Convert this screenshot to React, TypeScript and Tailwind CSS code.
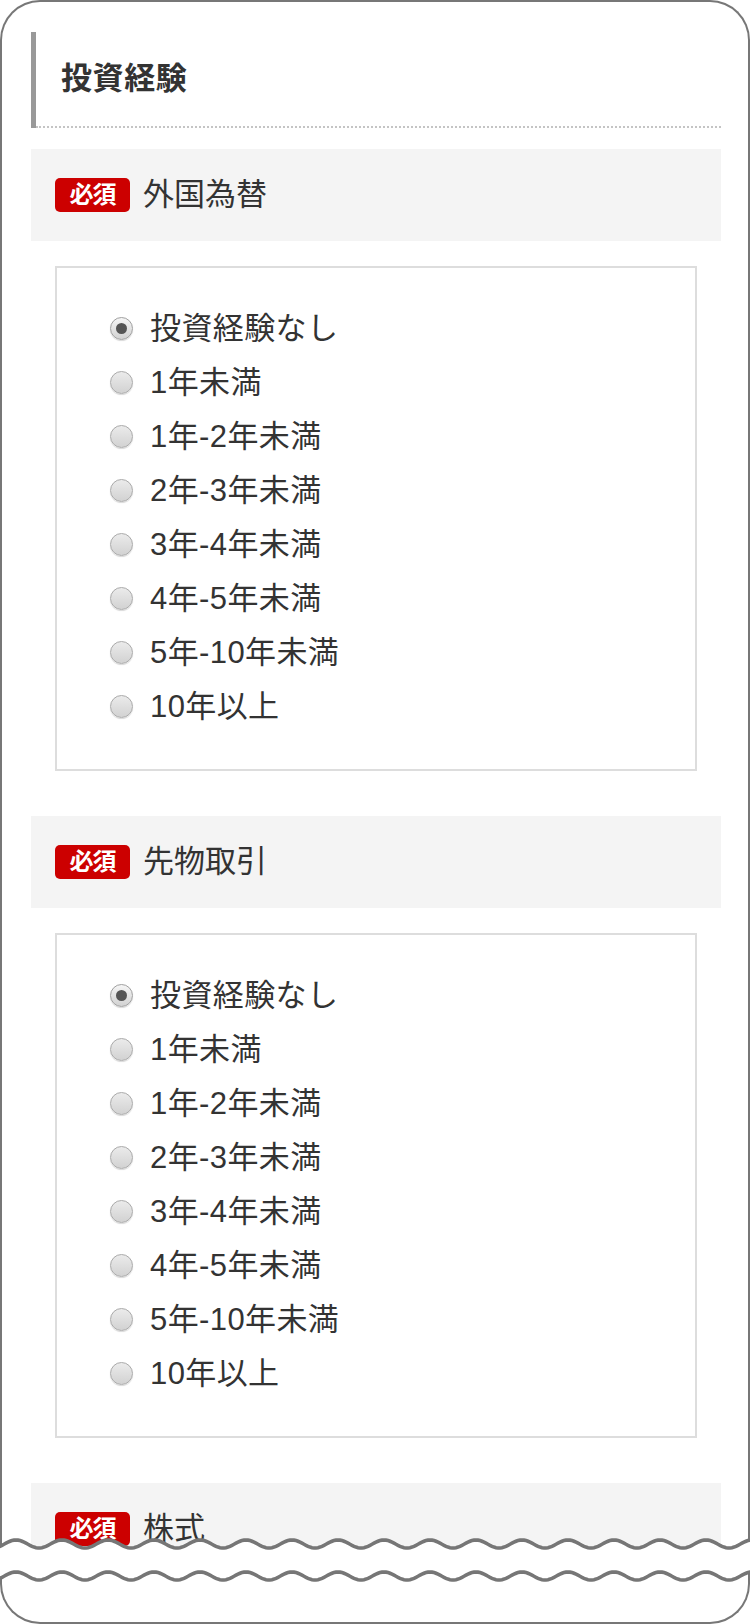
import React from 'react';

const OPTIONS = [
  '投資経験なし',
  '1年未満',
  '1年-2年未満',
  '2年-3年未満',
  '3年-4年未満',
  '4年-5年未満',
  '5年-10年未満',
  '10年以上',
];

const SECTIONS = ['外国為替', '先物取引', '株式'];

// torn-edge wave: y = c - A*cos(2π(x - 16)/P)
const wavePoints = (c: number) => {
  const pts: [number, number][] = [];
  for (let x = -4; x <= 756; x += 2) {
    pts.push([x, c - 4 * Math.cos((2 * Math.PI * (x - 16)) / 46)]);
  }
  return pts;
};

const toPath = (pts: [number, number][]) =>
  pts.map((p, i) => `${i === 0 ? 'M' : 'L'}${p[0]},${p[1].toFixed(2)}`).join(' ');

function Tear() {
  const top = wavePoints(16);
  const bottom = wavePoints(48);
  const fill = toPath(top) + ' ' + toPath([...bottom].reverse()).replace(/^M/, 'L') + ' Z';
  return (
    <svg className="absolute left-0 top-[1528px]" width="750" height="64" viewBox="0 0 750 64">
      <path d={fill} fill="#fff" />
      <path d={toPath(top)} fill="none" stroke="#767676" strokeWidth="3.6" />
      <path d={toPath(bottom)} fill="none" stroke="#767676" strokeWidth="3.6" />
    </svg>
  );
}

function Radio({ checked }: { checked: boolean }) {
  if (checked) {
    return (
      <span className="w-[23px] h-[23px] rounded-full border border-[#a0a0a0] bg-linear-to-b from-[#f6f6f6] to-[#d2d2d2] flex items-center justify-center shadow-[0_1px_1px_rgba(0,0,0,0.15)] shrink-0">
        <span className="w-[11px] h-[11px] rounded-full bg-[#555]" />
      </span>
    );
  }
  return (
    <span className="w-[23px] h-[23px] rounded-full border border-[#aaa] bg-linear-to-b from-[#ebebeb] to-[#d2d2d2] shadow-[0_1px_1px_rgba(0,0,0,0.15)] shrink-0" />
  );
}

function Section({ title, index }: { title: string; index: number }) {
  return (
    <div className={index === 0 ? 'mt-[21px]' : 'mt-[45px]'}>
      <div className="h-[92px] bg-[#f4f4f4] px-[24px] flex items-center gap-[13px]">
        <span className="w-[75px] h-[34px] rounded-[5px] bg-[#cc0000] text-white text-[24px] font-bold flex items-center justify-center tracking-[-1px]">
          必須
        </span>
        <span className="text-[31px] text-[#333]">{title}</span>
      </div>
      <div className="mt-[25px] mx-[24px] border-2 border-[#dddddd] pt-[33px] pb-[36px] pl-[53px]">
        {OPTIONS.map((opt, i) => (
          <div key={opt} className="h-[54px] flex items-center gap-[17px]">
            <Radio checked={i === 0} />
            <span className="text-[31px] text-[#333] leading-none tracking-[0.4px]">{opt}</span>
          </div>
        ))}
      </div>
    </div>
  );
}

export default function App() {
  return (
    <div className="w-[750px] h-[1624px] bg-white relative font-['Liberation_Sans','Noto_Sans_CJK_JP',sans-serif]">
      <div className="h-[1550px] border-2 border-b-0 border-[#777] rounded-t-[40px] overflow-hidden">
        <div className="pt-[30px] pl-[29px] pr-[27px]">
          {/* Heading */}
          <div className="border-l-[5px] border-[#999]">
            <div className="h-[96px] border-b-2 border-dotted border-[#c4c4c4] pl-[25px] flex items-center">
              <h1 className="text-[31px] font-bold text-[#333] tracking-[0.6px]">投資経験</h1>
            </div>
          </div>

          {SECTIONS.map((s, i) => (
            <Section key={s} title={s} index={i} />
          ))}
        </div>
      </div>
      <div className="h-[22px]" />
      <div className="h-[52px] border-2 border-t-0 border-[#777] rounded-b-[40px]" />
      <Tear />
    </div>
  );
}
